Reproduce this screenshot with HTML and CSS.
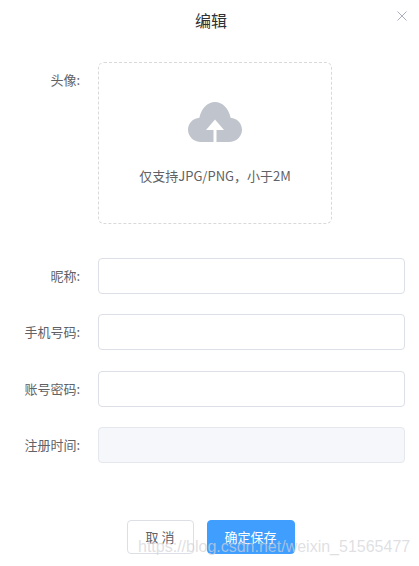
FILE: index.html
```html
<!DOCTYPE html>
<html lang="zh-CN">
<head>
    <meta charset="UTF-8">
    <title>编辑</title>
    <link rel="stylesheet" href="styles.css">
</head>
<body>
    <div class="dialog">
        <div class="dialog-header">
            <span class="dialog-title">编辑</span>
            <svg class="dialog-close" viewBox="0 0 10 10" width="10" height="10">
                <path d="M0.5 0.5L9.5 9.5M9.5 0.5L0.5 9.5" stroke="#a9b0c0" stroke-width="1" fill="none"/>
            </svg>
        </div>
        <form class="form">
            <div class="form-row form-row-upload">
                <label class="form-label">头像:</label>
                <div class="upload">
                    <svg class="upload-icon" viewBox="0 0 54 40" width="54" height="40">
                        <path fill="#c0c4cc" d="M13 40C5.800 40 0 34.600 0 27.800C0 21.400 5 16.200 11.400 15.700C13.200 6.600 19.400 0 27 0C34.600 0 40.800 6.600 42.600 15.700C49 16.200 54 21.400 54 27.800C54 34.600 48.200 40 41 40H28.500V28H36L27 17.500L18 28H25.500V40Z"/>
                    </svg>
                    <div class="upload-text">仅支持JPG/PNG，小于2M</div>
                </div>
            </div>
            <div class="form-row">
                <label class="form-label">昵称:</label>
                <input class="form-input" type="text">
            </div>
            <div class="form-row">
                <label class="form-label">手机号码:</label>
                <input class="form-input" type="text">
            </div>
            <div class="form-row">
                <label class="form-label">账号密码:</label>
                <input class="form-input" type="text">
            </div>
            <div class="form-row">
                <label class="form-label">注册时间:</label>
                <input class="form-input" type="text" disabled>
            </div>
        </form>
        <div class="dialog-footer">
            <button class="btn btn-cancel" type="button">取 消</button>
            <button class="btn btn-primary" type="button">确定保存</button>
        </div>
    </div>
    <div class="watermark">https://blog.csdn.net/weixin_51565477</div>
</body>
</html>
```

FILE: styles.css
```css
body {
    font-family: "Noto Sans CJK SC", "Liberation Sans", sans-serif;
    background: #fff;
    color: #606266;
    margin: 0;
    padding: 0;
    height: 566px;
    overflow: hidden;
}
.dialog {
    width: 419px;
}
.dialog-header {
    display: flex;
    justify-content: center;
    padding-top: 8px;
    padding-left: 3px;
    height: 62px;
    box-sizing: border-box;
    position: relative;
}
.dialog-title {
    font-size: 16px;
    line-height: 24px;
    color: #303133;
}
.dialog-close {
    position: absolute;
    top: 11px;
    right: 12px;
}
.form-row {
    display: flex;
    align-items: center;
    height: 36px;
    margin-bottom: 20.330px;
}
.form-row-upload {
    align-items: flex-start;
    height: 162px;
    margin-bottom: 34px;
}
.form-label {
    width: 80px;
    margin-right: 18px;
    text-align: right;
    font-size: 13px;
    line-height: 36px;
}
.upload {
    width: 234px;
    height: 162px;
    box-sizing: border-box;
    border: 1px dashed #d9d9d9;
    border-radius: 6px;
    display: flex;
    flex-direction: column;
    align-items: center;
    padding-top: 39px;
}
.upload-icon {
    display: block;
}
.upload-text {
    font-size: 13px;
    line-height: 20px;
    margin-top: 24px;
}
.form-input {
    width: 307px;
    height: 36px;
    box-sizing: border-box;
    border: 1px solid #dcdfe6;
    border-radius: 4px;
    background: #fff;
    padding: 0 15px;
    outline: none;
}
.form-input:disabled {
    background: #f5f7fa;
    border-color: #e4e7ed;
}
.dialog-footer {
    display: flex;
    justify-content: center;
    gap: 13px;
    margin-top: 57px;
    padding-left: 2px;
}
.btn {
    height: 34px;
    border-radius: 4px;
    font-family: inherit;
    font-size: 13px;
    padding: 0;
    cursor: pointer;
}
.btn-cancel {
    width: 67px;
    background: #fff;
    border: 1px solid #dcdfe6;
    color: #606266;
}
.btn-primary {
    width: 88px;
    background: #409eff;
    border: 1px solid #409eff;
    color: #fff;
}
.watermark {
    position: absolute;
    left: 138px;
    top: 537px;
    font-family: "Liberation Sans", sans-serif;
    font-size: 16px;
    line-height: 20px;
    color: rgba(210, 210, 215, 0.7);
    white-space: nowrap;
}
```
